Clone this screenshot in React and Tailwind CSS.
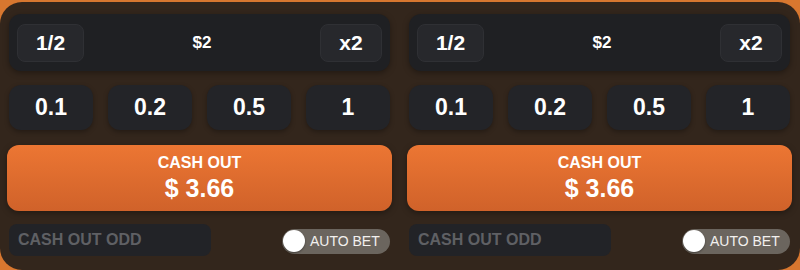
function BetPanel() {
 return (
  <div className="flex flex-col w-[381px]">

   <div className="flex items-center justify-between h-[57px] px-2 rounded-xl bg-[#1f2023] shadow-[0_2px_6px_rgba(0,0,0,0.35)]">
    <button className="w-[67px] h-[38px] rounded-lg bg-[#27282c] border border-[#2f3034] text-white font-bold text-[21px]">
     1/2
    </button>
    <span className="text-white font-bold text-[17px]">$2</span>
    <button className="w-[62px] h-[38px] rounded-lg bg-[#27282c] border border-[#2f3034] text-white font-bold text-[21px]">
     x2
    </button>
   </div>

   <div className="grid grid-cols-4 gap-[15px] mt-[14px]">
    {["0.1", "0.2", "0.5", "1"].map((v) => (
     <button key={v} className="h-[45px] rounded-xl bg-[#232428] text-white font-bold text-[23px] shadow-[0_2px_5px_rgba(0,0,0,0.3)]">
      {v}
     </button>
    ))}
   </div>

   <button className="mt-[15px] -mx-[2px] h-[66px] rounded-xl bg-gradient-to-b from-[#ec7633] to-[#d0622a] text-white font-bold flex flex-col items-center justify-center leading-none shadow-[0_2px_6px_rgba(0,0,0,0.35)]">
    <span className="text-[16px]">CASH OUT</span>
    <span className="text-[25px] mt-[5px]">$ 3.66</span>
   </button>

   <div className="flex items-center justify-between mt-[13px]">
    <div className="w-[202px] h-[32px] rounded-lg bg-[#222327] flex items-center pl-[9px] text-[#5f6064] font-bold text-[16px]">
     CASH OUT ODD
    </div>
    <div className="flex items-center w-[108px] h-[25px] rounded-full bg-[#6b655e] pl-[1px] gap-[5px] mt-[2px]">
     <div className="w-[22px] h-[22px] rounded-full bg-white shadow-[0_1px_2px_rgba(0,0,0,0.4)]" />
     <span className="text-[#f2f0ee] text-[14px]">AUTO BET</span>
    </div>
   </div>

  </div>
 );
}

export default function App() {
 return (
  <div className="w-[800px] h-[270px] bg-[#d8772f] pt-[2px] font-['Liberation_Sans',Arial,sans-serif]">
   <div className="h-[268px] rounded-[22px] bg-[#33261c] flex gap-[19px] px-[9px] pt-[12px]">
    <BetPanel />
    <BetPanel />
   </div>
  </div>
 );
}
